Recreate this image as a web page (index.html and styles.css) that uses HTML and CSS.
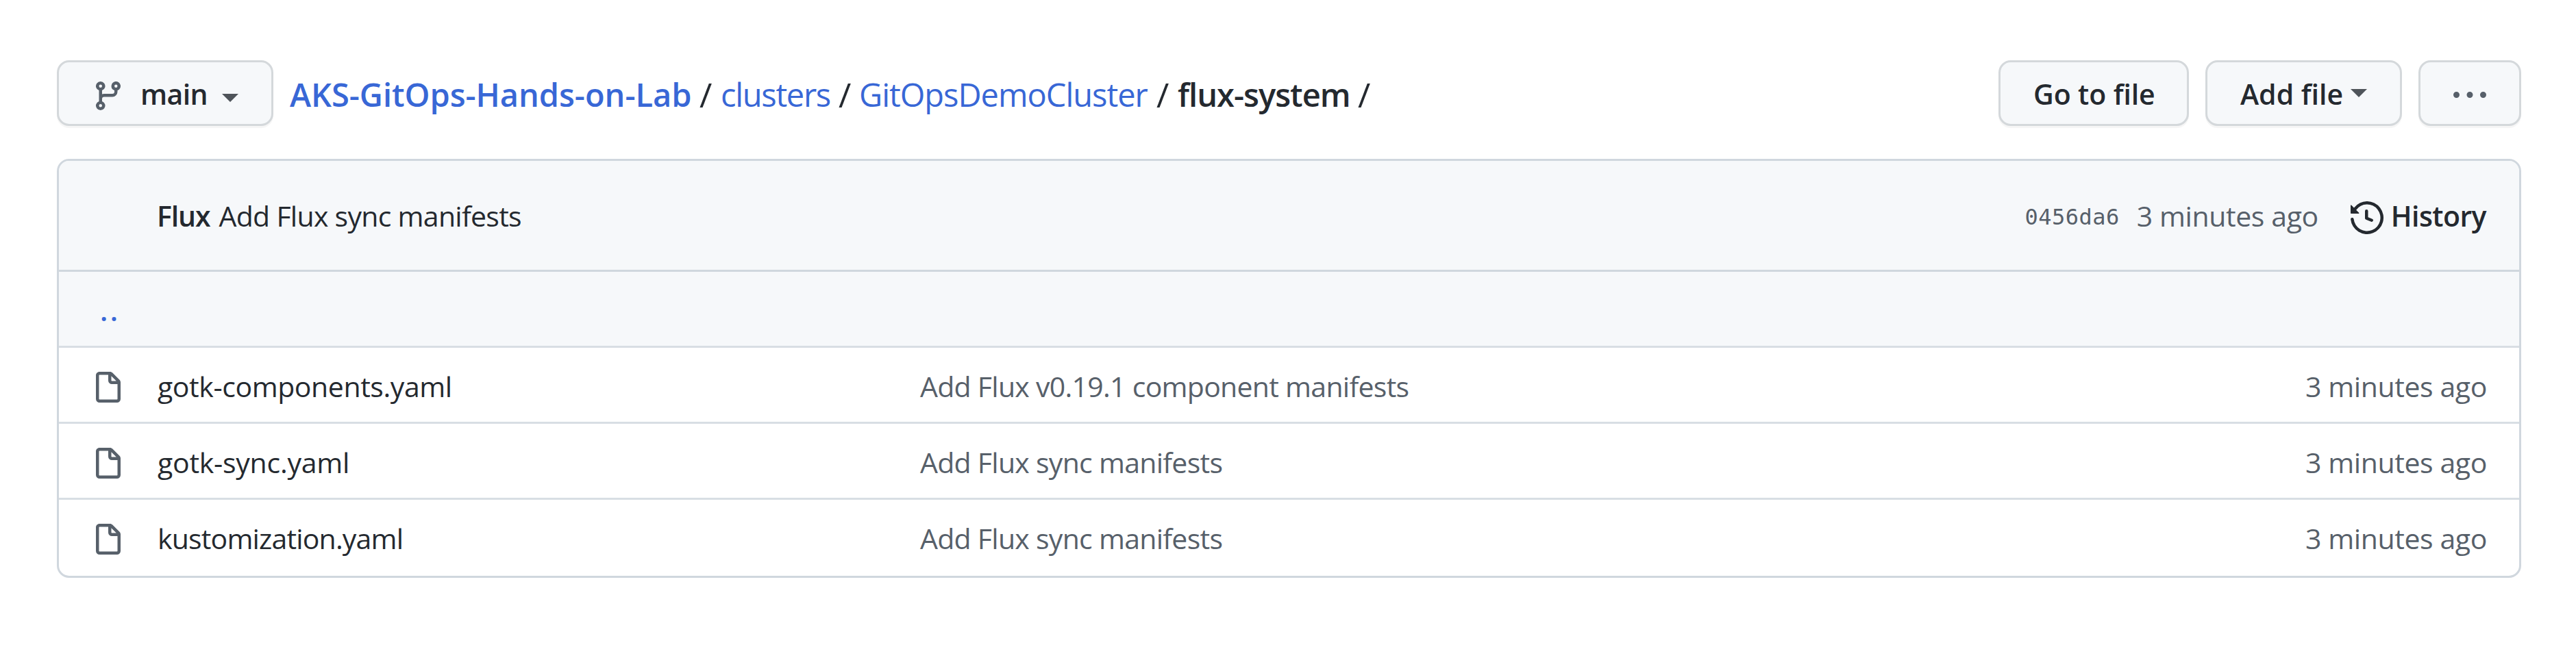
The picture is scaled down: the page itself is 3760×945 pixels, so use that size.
FILE: index.html
```html
<!DOCTYPE html>
<html lang="en">
<head>
<meta charset="utf-8">
<title>AKS-GitOps-Hands-on-Lab / flux-system</title>
<link rel="stylesheet" href="styles.css">
</head>
<body>
<svg class="defs" aria-hidden="true">
  <symbol id="file" viewBox="0 0 16 16"><path fill-rule="evenodd" d="M3.75 1.5a.25.25 0 00-.25.25v11.5c0 .138.112.25.25.25h8.5a.25.25 0 00.25-.25V6H9.75A1.75 1.75 0 018 4.25V1.5H3.75zm5.75.56v2.19c0 .138.112.25.25.25h2.19L9.5 2.06zM2 1.75C2 .784 2.784 0 3.75 0h5.086c.464 0 .909.184 1.237.513l3.414 3.414c.329.328.513.773.513 1.237v8.086A1.75 1.75 0 0112.25 15h-8.5A1.75 1.75 0 012 13.25V1.75z"/></symbol>
</svg>
<main class="page">
  <div class="toolbar">
    <button class="btn btn-branch">
      <svg class="icon" viewBox="0 0 16 16"><path fill-rule="evenodd" d="M11.75 2.5a.75.75 0 100 1.5.75.75 0 000-1.5zm-2.25.75a2.25 2.25 0 113 2.122V6A2.5 2.5 0 0110 8.5H6a1 1 0 00-1 1v1.128a2.251 2.251 0 11-1.5 0V5.372a2.25 2.25 0 111.5 0v1.836A2.492 2.492 0 016 7h4a1 1 0 001-1v-.628A2.25 2.25 0 019.5 3.25zM4.25 12a.75.75 0 100 1.5.75.75 0 000-1.5zM3.5 3.25a.75.75 0 111.5 0 .75.75 0 01-1.5 0z"/></svg>
      <span class="btn-text branch-name">main</span>
      <span class="caret caret-branch"></span>
    </button>
    <nav class="crumbs">
      <a class="crumb-root">AKS-GitOps-Hands-on-Lab</a><span class="slash">/</span>
      <a class="crumb-clusters">clusters</a><span class="slash">/</span>
      <a class="crumb-demo">GitOpsDemoCluster</a><span class="slash">/</span>
      <strong class="crumb-current">flux-system</strong><span class="slash">/</span>
    </nav>
    <div class="actions">
      <button class="btn btn-goto"><span class="btn-text">Go to file</span></button>
      <button class="btn btn-add"><span class="btn-text">Add file</span><span class="caret caret-add"></span></button>
      <button class="btn btn-more" aria-label="More options"><svg class="icon" viewBox="0 0 16 16"><path d="M8 9a1.5 1.5 0 100-3 1.5 1.5 0 000 3zM1.5 9a1.5 1.5 0 100-3 1.5 1.5 0 000 3zm13 0a1.5 1.5 0 100-3 1.5 1.5 0 000 3z"/></svg></button>
    </div>
  </div>
  <section class="box">
    <header class="commit">
      <strong class="author">Flux</strong>
      <span class="commit-title">Add Flux sync manifests</span>
      <span class="sha">0456da6</span>
      <span class="time commit-time">3 minutes ago</span>
      <a class="history">
        <svg class="icon icon-history" viewBox="0 0 16 16"><path fill-rule="evenodd" d="M1.643 3.143L.427 1.927A.25.25 0 000 2.104V5.75c0 .138.112.25.25.25h3.646a.25.25 0 00.177-.427L2.715 4.215a6.5 6.5 0 11-1.18 4.458.75.75 0 10-1.493.154 8.001 8.001 0 101.6-5.684zM7.75 4a.75.75 0 01.75.75v2.992l2.028.812a.75.75 0 01-.557 1.392l-2.5-1A.75.75 0 017 8.25v-3.5A.75.75 0 017.75 4z"/></svg>
        <span>History</span>
      </a>
    </header>
    <div class="row row-up"><a class="up">..</a></div>
    <div class="row">
      <svg class="icon"><use href="#file"/></svg>
      <span class="name name-components">gotk-components.yaml</span>
      <span class="message">Add Flux v0.19.1 component manifests</span>
      <span class="time">3 minutes ago</span>
    </div>
    <div class="row">
      <svg class="icon"><use href="#file"/></svg>
      <span class="name name-sync">gotk-sync.yaml</span>
      <span class="message">Add Flux sync manifests</span>
      <span class="time">3 minutes ago</span>
    </div>
    <div class="row">
      <svg class="icon"><use href="#file"/></svg>
      <span class="name name-kustomization">kustomization.yaml</span>
      <span class="message">Add Flux sync manifests</span>
      <span class="time">3 minutes ago</span>
    </div>
  </section>
</main>
</body>
</html>
```
FILE: styles.css
```css
* { box-sizing: border-box; }

body {
  margin: 0;
  background: #fff;
  color: #24292f;
  font: 400 41px/60px "Open Sans", "Noto Sans", sans-serif;
}

.defs { display: none; }

.page { padding: 88px 80px 0 83px; }

.icon {
  display: block;
  flex: none;
  width: 48px;
  height: 48px;
  fill: #57606a;
}

/* Toolbar */
.toolbar {
  display: flex;
  align-items: center;
  height: 96px;
  margin-bottom: 48px;
}

.btn {
  display: flex;
  align-items: center;
  height: 96px;
  padding: 0 48px;
  border: 3px solid #d4d8db;
  border-radius: 18px;
  background: #f6f8fa;
  box-shadow: 0 3px 0 rgba(27, 31, 36, 0.04);
  color: #24292f;
  font: 600 41px/60px "Open Sans", "Noto Sans", sans-serif;
  white-space: nowrap;
}

.btn .icon { margin-top: 8px; }
.btn-text { padding-top: 2px; }

.btn-branch { width: 316px; }
.branch-name { width: 119px; margin-left: 23px; letter-spacing: -0.63px; text-align: left; }
.btn-goto { width: 278px; }
.btn-goto .btn-text { letter-spacing: -0.1px; }
.btn-add { width: 287px; }
.btn-more { width: 150px; }

.caret {
  border: 12px solid transparent;
  border-top-color: #4f545a;
  border-bottom: 0;
}

.caret-branch { margin-top: 14px; }
.caret-add { margin-left: 11px; }

.crumbs {
  display: grid;
  grid-template-columns: 598px 31px 172px 30px 434px 31px 263px auto;
  margin-left: 24px;
  padding-top: 4px;
  font-size: 47px;
  line-height: 64px;
  white-space: nowrap;
}

.crumbs a { color: #3867d6; }
.crumbs .crumb-root { font-weight: 600; letter-spacing: -0.05px; }
.crumb-clusters { letter-spacing: -1.3px; }
.crumb-demo { letter-spacing: -1px; }
.crumb-current { font-weight: 600; letter-spacing: -0.98px; }
.slash { font-size: 50px; }

.actions {
  display: flex;
  gap: 24px;
  margin-left: auto;
}

/* File list */
.box {
  overflow: hidden;
  border: 3px solid #d0d7de;
  border-radius: 18px;
}

.commit {
  display: flex;
  align-items: center;
  height: 162px;
  padding: 0 48px 0 143px;
  border-bottom: 3px solid #d0d7de;
  background: #f6f8fa;
  white-space: nowrap;
}

.author { font-weight: 600; letter-spacing: -1.1px; }
.commit-title { margin-left: 13px; letter-spacing: -0.71px; }

.sha {
  margin-left: auto;
  padding-top: 4px;
  color: #57606a;
  font: 32px/60px "DejaVu Sans Mono", monospace;
  letter-spacing: 0.5px;
}

.time {
  color: #57606a;
  letter-spacing: -0.4px;
}

.commit-time { margin-left: 25px; }

.history {
  display: flex;
  align-items: center;
  gap: 11px;
  margin-left: 47px;
  font-weight: 600;
  letter-spacing: -0.55px;
}

.icon-history { margin-top: 6px; fill: #24292f; }

.row {
  display: grid;
  grid-template-columns: 48px 1066px 1fr auto;
  align-items: center;
  column-gap: 48px;
  height: 111px;
  padding: 4px 47px 0 48px;
  border-bottom: 3px solid #d8dee4;
  white-space: nowrap;
}

.row .icon { margin-top: 6px; }

.row:last-child {
  padding-bottom: 3px;
  border-bottom: 0;
}

.message {
  margin-left: -1px;
  color: #57606a;
  letter-spacing: -0.72px;
}

.name-components { letter-spacing: -0.42px; }
.name-sync { letter-spacing: -0.25px; }
.name-kustomization { letter-spacing: -0.82px; }

.row-up { display: block; background: #f6f8fa; }

.up {
  display: block;
  padding: 22px 0 0 12px;
  color: #3867d6;
  font-weight: 600;
  letter-spacing: 3.5px;
}
```
